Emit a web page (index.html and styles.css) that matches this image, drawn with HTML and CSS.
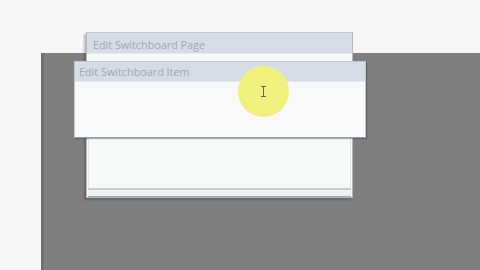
FILE: index.html
```html
<!DOCTYPE html>
<html>
<head>
<meta charset="utf-8">
<link rel="stylesheet" href="styles.css">
</head>
<body>
<div class="screen">
  <div class="backdrop"></div>
  <div class="dialog back">
    <div class="titlebar">Edit Switchboard Page</div>
    <div class="body">
      <div class="panel"></div>
      <div class="footer"></div>
    </div>
  </div>
  <div class="dialog front">
    <div class="titlebar">Edit Switchboard Item</div>
    <div class="body"></div>
  </div>
  <div class="highlight"><div class="ibeam"></div></div>
</div>
</body>
</html>
```
FILE: styles.css
```css
html, body {
  margin: 0;
  padding: 0;
  width: 480px;
  height: 270px;
  overflow: hidden;
  background: #f7f7f7;
  font-family: "Open Sans", "DejaVu Sans", sans-serif;
}
.screen {
  position: relative;
  width: 480px;
  height: 270px;
}
.backdrop {
  position: absolute;
  left: 41px;
  top: 53px;
  right: 0;
  bottom: 0;
  background: #7f7f7f;
  border-left: 3px solid #727272;
}
.dialog {
  position: absolute;
  display: flex;
  flex-direction: column;
  box-sizing: border-box;
  background: #f8f8f9;
  box-shadow: -2px 2px 2px rgba(60,60,60,0.35);
}
.titlebar {
  background: #d6dce5;
  color: #a3a8af;
  font-size: 10.8px;
  line-height: 19px;
  height: 19px;
  padding-left: 6px;
  white-space: nowrap;
  border-bottom: 1px solid #e6e9ee;
}
.back {
  left: 86px;
  top: 32px;
  width: 267px;
  height: 166px;
  border: 1px solid #b3b9c2;
  border-top-color: #c5cad2;
}
.back .titlebar {
  height: 20px;
  line-height: 24px;
}
.back .body {
  flex: 1;
  display: flex;
  flex-direction: column;
  justify-content: flex-end;
  padding: 0 1px;
}
.back .panel {
  height: 52px;
  background: #f7f8f8;
  border-left: 1px solid #dfe3e3;
  border-right: 1px solid #dfe3e3;
  border-bottom: 2px solid #c8cccc;
}
.back .footer {
  height: 6px;
  background: #eef2f1;
  border-bottom: 1px solid #9ea6a4;
}
.front {
  left: 74px;
  top: 61px;
  width: 292px;
  height: 77px;
  border: 1px solid #c3c8cf;
  border-bottom: 1px solid #9a9ea4;
  box-shadow: 1px 1px 1px rgba(60,60,60,0.4);
}
.front .titlebar {
  padding-left: 4px;
  line-height: 20px;
}
.front .body {
  flex: 1;
  background: #f9f9f9;
}
.highlight {
  position: absolute;
  left: 238px;
  top: 66px;
  width: 51px;
  height: 51px;
  border-radius: 50%;
  background: radial-gradient(circle, #f1f17e 0%, #f0f07c 80%, rgba(245,245,150,0.6) 95%, rgba(248,248,248,0) 100%);
}
.ibeam {
  position: absolute;
  left: 25px;
  top: 20px;
  width: 1px;
  height: 11px;
  background: #6a6a50;
}
.ibeam::before, .ibeam::after {
  content: "";
  position: absolute;
  left: -2px;
  width: 5px;
  height: 1px;
  background: #6a6a50;
}
.ibeam::before { top: 0; }
.ibeam::after { bottom: 0; }
```
